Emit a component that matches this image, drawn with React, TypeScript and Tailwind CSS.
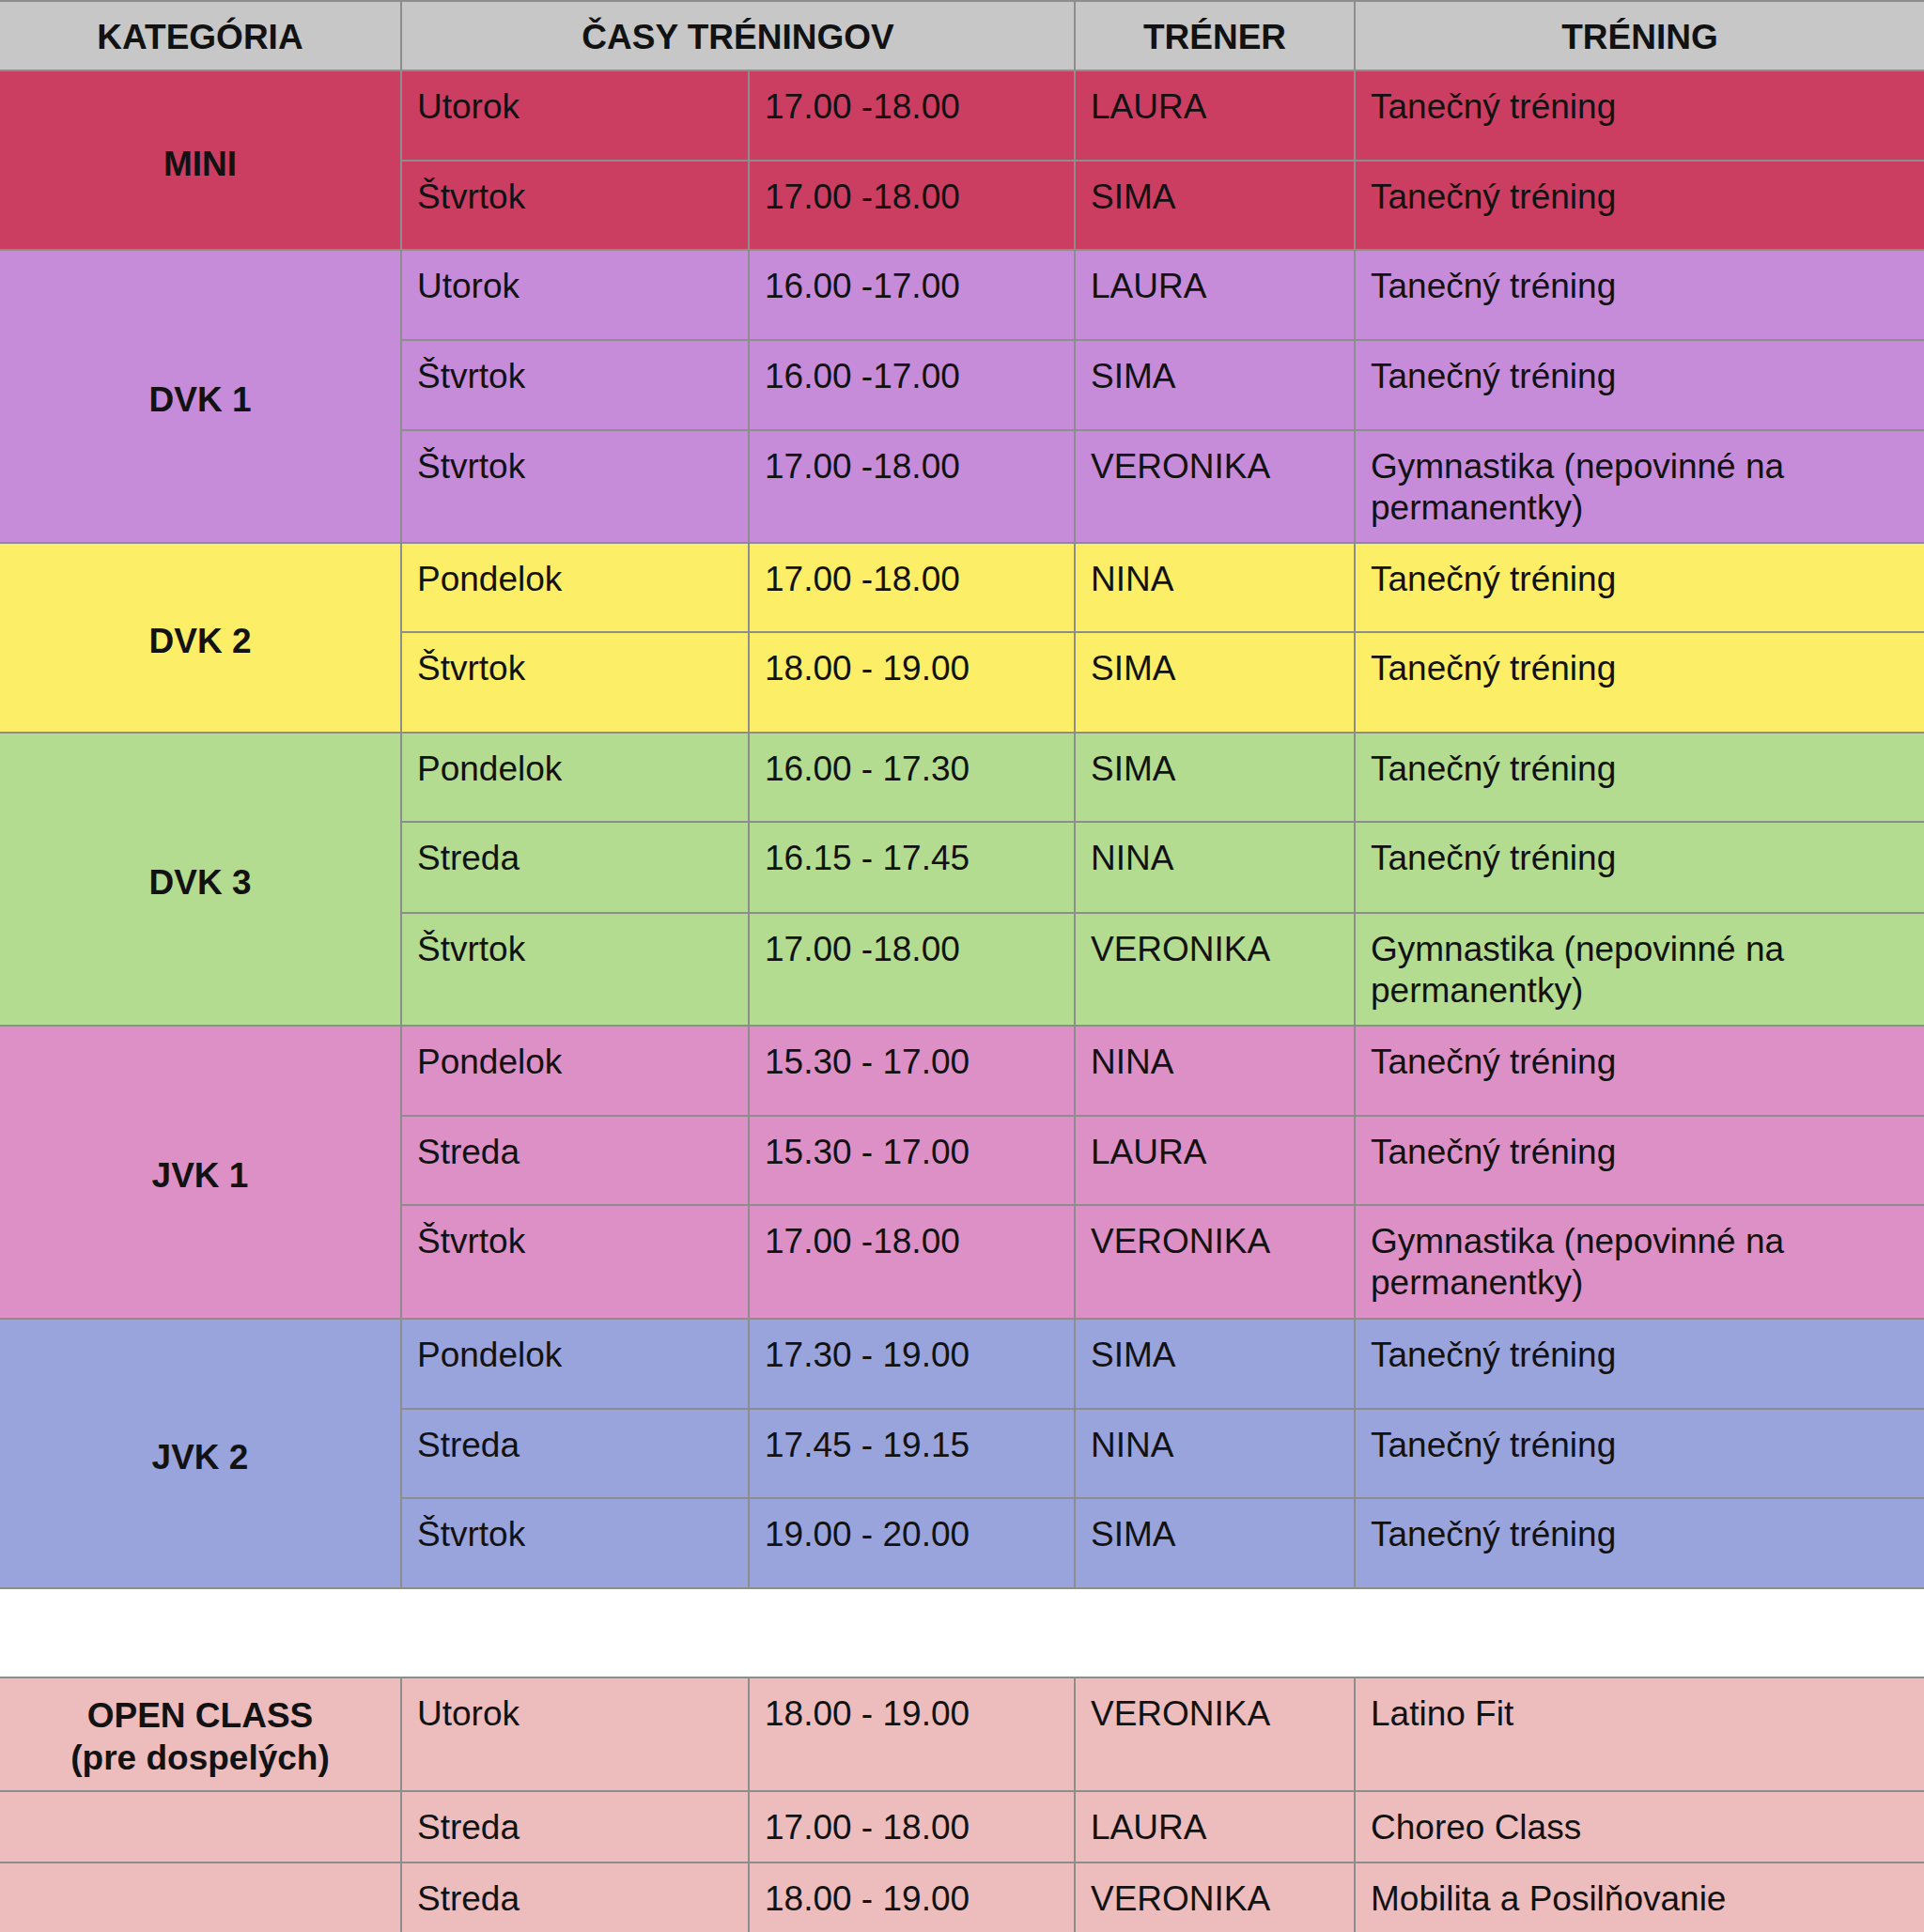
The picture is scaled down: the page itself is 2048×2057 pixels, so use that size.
type Row = {
  day: string;
  time: string;
  coach: string;
  training: string;
  h: string;
};

type Group = {
  name: string;
  bg: string;
  rows: Row[];
};

const GYM = "Gymnastika (nepovinné na permanentky)";
const TT = "Tanečný tréning";

const groups: Group[] = [
  {
    name: "MINI",
    bg: "bg-[#cc3d62]",
    rows: [
      { day: "Utorok", time: "17.00 -18.00", coach: "LAURA", training: TT, h: "h-[94px]" },
      { day: "Štvrtok", time: "17.00 -18.00", coach: "SIMA", training: TT, h: "h-[93px]" },
    ],
  },
  {
    name: "DVK 1",
    bg: "bg-[#c68bd9]",
    rows: [
      { day: "Utorok", time: "16.00 -17.00", coach: "LAURA", training: TT, h: "h-[94px]" },
      { day: "Štvrtok", time: "16.00 -17.00", coach: "SIMA", training: TT, h: "h-[94px]" },
      { day: "Štvrtok", time: "17.00 -18.00", coach: "VERONIKA", training: GYM, h: "h-[118px]" },
    ],
  },
  {
    name: "DVK 2",
    bg: "bg-[#fcee67]",
    rows: [
      { day: "Pondelok", time: "17.00 -18.00", coach: "NINA", training: TT, h: "h-[93px]" },
      { day: "Štvrtok", time: "18.00 - 19.00", coach: "SIMA", training: TT, h: "h-[105px]" },
    ],
  },
  {
    name: "DVK 3",
    bg: "bg-[#b3dc90]",
    rows: [
      { day: "Pondelok", time: "16.00 - 17.30", coach: "SIMA", training: TT, h: "h-[93px]" },
      { day: "Streda", time: "16.15 - 17.45", coach: "NINA", training: TT, h: "h-[95px]" },
      { day: "Štvrtok", time: "17.00 -18.00", coach: "VERONIKA", training: GYM, h: "h-[118px]" },
    ],
  },
  {
    name: "JVK 1",
    bg: "bg-[#dc90c5]",
    rows: [
      { day: "Pondelok", time: "15.30 - 17.00", coach: "NINA", training: TT, h: "h-[94px]" },
      { day: "Streda", time: "15.30 - 17.00", coach: "LAURA", training: TT, h: "h-[93px]" },
      { day: "Štvrtok", time: "17.00 -18.00", coach: "VERONIKA", training: GYM, h: "h-[119px]" },
    ],
  },
  {
    name: "JVK 2",
    bg: "bg-[#99a3dc]",
    rows: [
      { day: "Pondelok", time: "17.30 - 19.00", coach: "SIMA", training: TT, h: "h-[94px]" },
      { day: "Streda", time: "17.45 - 19.15", coach: "NINA", training: TT, h: "h-[93px]" },
      { day: "Štvrtok", time: "19.00 - 20.00", coach: "SIMA", training: TT, h: "h-[94px]" },
    ],
  },
];

const openRows: (Row & { cat?: boolean })[] = [
  { day: "Utorok", time: "18.00 - 19.00", coach: "VERONIKA", training: "Latino Fit", h: "h-[119px]", cat: true },
  { day: "Streda", time: "17.00 - 18.00", coach: "LAURA", training: "Choreo Class", h: "h-[74px]" },
  { day: "Streda", time: "18.00 - 19.00", coach: "VERONIKA", training: "Mobilita a Posilňovanie", h: "h-[94px]" },
];

const Cell = ({ bg, children }: { bg: string; children?: React.ReactNode }) => (
  <div className={`${bg} px-4 pt-4`}>{children}</div>
);

export default function App() {
  return (
    <div className="h-[2057px] overflow-hidden bg-white font-['Liberation_Sans',Arial,sans-serif] text-[37px] leading-[44px] text-[#121212]">
      <div className="flex flex-col gap-[2px] border-y-2 border-[#8d8d8d] bg-[#8d8d8d]">
        <div className="grid h-[72px] grid-cols-[426px_715px_296px_1fr] gap-[2px] font-bold">
          <div className="flex items-center justify-center bg-[#c6c7c6] pt-1">KATEGÓRIA</div>
          <div className="flex items-center justify-center bg-[#c6c7c6] pt-1">ČASY TRÉNINGOV</div>
          <div className="flex items-center justify-center bg-[#c6c7c6] pt-1">TRÉNER</div>
          <div className="flex items-center justify-center bg-[#c6c7c6] pt-1">TRÉNING</div>
        </div>

        {groups.map((g) => (
          <div key={g.name} className="flex gap-[2px]">
            <div className={`${g.bg} flex w-[426px] shrink-0 items-center justify-center pt-2 font-bold`}>
              {g.name}
            </div>
            <div className="flex flex-1 flex-col gap-[2px]">
              {g.rows.map((r, i) => (
                <div key={i} className={`grid grid-cols-[368px_345px_296px_1fr] gap-[2px] ${r.h}`}>
                  <Cell bg={g.bg}>{r.day}</Cell>
                  <Cell bg={g.bg}>{r.time}</Cell>
                  <Cell bg={g.bg}>{r.coach}</Cell>
                  <Cell bg={g.bg}>{r.training}</Cell>
                </div>
              ))}
            </div>
          </div>
        ))}
      </div>

      <div className="h-[93px]" />

      <div className="flex flex-col gap-[2px] border-t-2 border-[#8d8d8d] bg-[#8d8d8d]">
        {openRows.map((r, i) => (
          <div key={i} className={`grid grid-cols-[426px_368px_345px_296px_1fr] gap-[2px] ${r.h}`}>
            <div className="flex flex-col items-center justify-center bg-[#edbcbc] pt-1 text-center leading-[45px] font-bold">
              {r.cat && (
                <>
                  <span>OPEN CLASS</span>
                  <span>(pre dospelých)</span>
                </>
              )}
            </div>
            <Cell bg="bg-[#edbcbc]">{r.day}</Cell>
            <Cell bg="bg-[#edbcbc]">{r.time}</Cell>
            <Cell bg="bg-[#edbcbc]">{r.coach}</Cell>
            <Cell bg="bg-[#edbcbc]">{r.training}</Cell>
          </div>
        ))}
      </div>
    </div>
  );
}
